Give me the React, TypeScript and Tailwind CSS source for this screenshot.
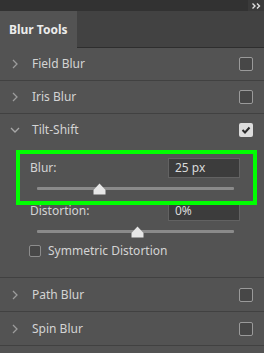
import React from "react";

const font = { fontFamily: '"Noto Sans", "Open Sans", sans-serif' };

function ChevronRight() {
  return (
    <svg width="8" height="12" viewBox="0 0 8 12" className="shrink-0">
      <polyline points="2,2 6,6 2,10" fill="none" stroke="#9c9c9c" strokeWidth="1.3" />
    </svg>
  );
}

function ChevronDown() {
  return (
    <svg width="10" height="8" viewBox="0 0 10 8" className="shrink-0">
      <polyline points="1,2 5,6 9,2" fill="none" stroke="#a8a8a8" strokeWidth="1.3" />
    </svg>
  );
}

function Box({ checked }: { checked?: boolean }) {
  if (checked) {
    return (
      <div className="w-[14px] h-[14px] rounded-[2px] bg-[#dcdcdc] flex items-center justify-center">
        <svg width="10" height="8" viewBox="0 0 10 8">
          <polyline points="1.5,4 4,6.5 8.5,1.5" fill="none" stroke="#2a2a2a" strokeWidth="2" />
        </svg>
      </div>
    );
  }
  return <div className="w-[14px] h-[14px] rounded-[2px] border border-[#9a9a9a] bg-[#474747]" />;
}

function Row({ label, tall }: { label: string; tall?: boolean }) {
  return (
    <div
      className={
        (tall ? "h-[34px] " : "h-[33px] ") +
        "border-b border-[#414141] flex items-center pl-[11px] pr-[11px]"
      }
    >
      <div className="w-[21px] flex items-center">
        <ChevronRight />
      </div>
      <span className="text-[12px] text-[#d4d4d4] flex-1">{label}</span>
      <Box />
    </div>
  );
}

function Thumb() {
  return (
    <svg width="13" height="12" viewBox="0 0 13 12">
      <polygon points="6.5,0.5 12.5,7 12.5,11.5 0.5,11.5 0.5,7" fill="#e6e6e6" />
    </svg>
  );
}

function Slider({ pos }: { pos: number }) {
  return (
    <div className="relative h-[20px] ml-[37px] w-[197px]">
      <div className="absolute left-0 right-0 top-[9px] h-[3px] bg-[#8a8a8a] rounded-[1px]" />
      <div className="absolute top-[5px]" style={{ left: pos - 6 }}>
        <Thumb />
      </div>
    </div>
  );
}

function Field({ label, value }: { label: string; value: string }) {
  return (
    <div className="flex items-center h-[20px] pl-[30px]">
      <span className="text-[12px] text-[#d4d4d4] w-[138px]">{label}</span>
      <div className="w-[72px] h-[20px] bg-[#3c3c3c] border border-[#626262] flex items-center pl-[6px]">
        <span className="text-[12px] text-[#dadada]">{value}</span>
      </div>
    </div>
  );
}

export default function App() {
  return (
    <div className="relative w-[264px] h-[353px] bg-[#535353] overflow-hidden" style={font}>
      <div className="h-[11px] bg-[#323232] flex justify-end">
        <div className="w-[16px] h-[11px] bg-[#3a3a3a] flex items-center justify-center">
          <svg width="9" height="6" viewBox="0 0 9 6">
            <polyline points="0.5,0.5 3,3 0.5,5.5" fill="none" stroke="#e0e0e0" strokeWidth="1.4" />
            <polyline points="5,0.5 7.5,3 5,5.5" fill="none" stroke="#e0e0e0" strokeWidth="1.4" />
          </svg>
        </div>
      </div>
      <div className="h-[37px] flex">
        <div className="w-[77px] bg-[#535353] flex items-center pl-[9px]">
          <span className="text-[12px] font-bold text-[#ececec]">Blur Tools</span>
        </div>
        <div className="flex-1 bg-[#424242] border-b border-[#2e2e2e]" />
      </div>
      <Row label="Field Blur" />
      <Row label="Iris Blur" />
      <div className="border-b border-[#414141]">
        <div className="h-[32px] flex items-center pl-[10px] pr-[11px]">
          <div className="w-[22px] flex items-center">
            <ChevronDown />
          </div>
          <span className="text-[12px] text-[#d4d4d4] flex-1">Tilt-Shift</span>
          <Box checked />
        </div>
        <div className="pt-[12px] pb-[18px]">
          <Field label="Blur:" value="25 px" />
          <Slider pos={62} />
          <div className="h-[3px]" />
          <Field label="Distortion:" value="0%" />
          <Slider pos={100} />
          <div className="flex items-center h-[16px] mt-[2px] pl-[29px]">
            <div className="w-[12px] h-[12px] rounded-[2px] border border-[#8c8c8c] bg-[#474747]" />
            <span className="text-[12px] text-[#d4d4d4] ml-[7px]">Symmetric Distortion</span>
          </div>
        </div>
      </div>
      <Row label="Path Blur" tall />
      <Row label="Spin Blur" tall />
      <div className="absolute left-[16px] top-[150px] w-[241px] h-[55px] border-[4px] border-[#00ff00] pointer-events-none" />
    </div>
  );
}
